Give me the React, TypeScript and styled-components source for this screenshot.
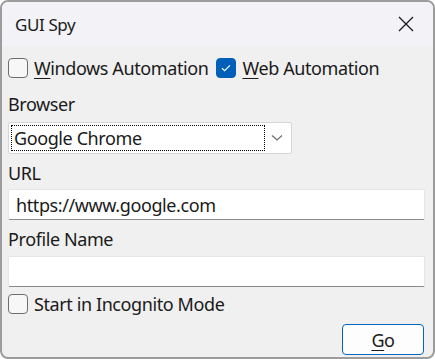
import React, {FC} from 'react';
import styled, {createGlobalStyle} from "styled-components";

const GlobalStyle = createGlobalStyle`
  html, body {
    margin: 0;
    padding: 0;
    background: #ffffff;
  }
  body {
    font-family: "Noto Sans", "Open Sans", sans-serif;
    font-size: 18px;
    letter-spacing: -0.4px;
    color: #1a1a1a;
  }
`

const Window = styled.div`
  width: 435px;
  height: 359px;
  box-sizing: border-box;
  border: 2px solid #9c9c9c;
  border-radius: 8px;
  overflow: hidden;
  background: #f0f0f0;
  display: flex;
  flex-direction: column;
`
const TitleBar = styled.div`
  height: 44px;
  flex: none;
  display: flex;
  align-items: center;
  justify-content: space-between;
  padding: 0 18px 0 13px;
  background: #f3f2f7;
  font-size: 17px;
  color: #1b1b1b;
`
const CloseButton = styled.div`
  display: flex;
  align-items: center;
  justify-content: center;
  width: 18px;
  height: 18px;
`
const Content = styled.div`
  flex: 1;
  display: flex;
  flex-direction: column;
  padding: 11px 8px 0 6px;
`
const CheckRow = styled.div<{ $gap?: number }>`
  display: flex;
  align-items: center;
  gap: 8px;
  height: 22px;
  margin-top: ${p => p.$gap ?? 0}px;
`
const CheckItem = styled.label`
  display: flex;
  align-items: center;
  gap: 6px;
  white-space: nowrap;
`
const Box = styled.span<{ $checked?: boolean }>`
  width: 20px;
  height: 20px;
  box-sizing: border-box;
  border-radius: 4px;
  border: 1px solid ${p => p.$checked ? '#005fb8' : '#6e6e6e'};
  background: ${p => p.$checked ? '#005fb8' : '#f7f7f7'};
  display: flex;
  align-items: center;
  justify-content: center;
  flex: none;
`
const Key = styled.span`
  text-decoration: underline;
  text-underline-offset: 3px;
  text-decoration-thickness: 1px;
`
const FieldLabel = styled.div<{ $gap: number }>`
  line-height: 24px;
  height: 24px;
  margin-top: ${p => p.$gap}px;
`
const Combo = styled.div`
  width: 284px;
  height: 32px;
  box-sizing: border-box;
  margin-top: 6px;
  background: #ffffff;
  border: 1px solid #d6d6d6;
  border-radius: 2px;
  display: flex;
  align-items: center;
  padding: 2px;
`
const ComboValue = styled.div`
  width: 254px;
  height: 26px;
  box-sizing: border-box;
  border: 1px dotted #000000;
  display: flex;
  align-items: center;
  padding-left: 2px;
  line-height: 24px;
`
const Chevron = styled.div`
  flex: 1;
  display: flex;
  justify-content: center;
  align-items: center;
`
const Field = styled.div<{ $gap: number }>`
  height: 31px;
  flex: none;
  box-sizing: border-box;
  margin-top: ${p => p.$gap}px;
  background: #ffffff;
  border: 1px solid #e6e6e6;
  border-bottom: 1px solid #8a8a8a;
  border-radius: 2px;
  display: flex;
  align-items: center;
  padding-left: 7px;
`
const Footer = styled.div`
  display: flex;
  justify-content: flex-end;
  margin-top: 9px;
  padding-right: 1px;
`
const GoButton = styled.button`
  width: 82px;
  height: 31px;
  box-sizing: border-box;
  border: 1px solid #0067c0;
  border-radius: 4px;
  background: #fdfdfd;
  font-family: inherit;
  font-size: 18px;
  letter-spacing: inherit;
  color: #1a1a1a;
  padding: 0;
`

const Check: FC = () => (
    <svg width="12" height="10" viewBox="0 0 12 10">
        <path d="M2 5.2 L4.6 7.6 L10 2.4" fill="none" stroke="#ffffff" strokeWidth="1.2"/>
    </svg>
)

const App: FC = () => {
    return (
        <>
            <GlobalStyle/>
            <Window>
                <TitleBar>
                    <span>GUI Spy</span>
                    <CloseButton>
                        <svg width="16" height="16" viewBox="0 0 16 16">
                            <path d="M1 1 L15 15 M15 1 L1 15" stroke="#1b1b1b" strokeWidth="1.3"/>
                        </svg>
                    </CloseButton>
                </TitleBar>
                <Content>
                    <CheckRow>
                        <CheckItem>
                            <Box/>
                            <span><Key>W</Key>indows Automation</span>
                        </CheckItem>
                        <CheckItem>
                            <Box $checked><Check/></Box>
                            <span><Key>W</Key>eb Automation</span>
                        </CheckItem>
                    </CheckRow>
                    <FieldLabel $gap={13}>Browser</FieldLabel>
                    <Combo>
                        <ComboValue>Google Chrome</ComboValue>
                        <Chevron>
                            <svg width="12" height="8" viewBox="0 0 12 8">
                                <path d="M1 1.5 L6 6 L11 1.5" fill="none" stroke="#6a6a6a" strokeWidth="1.1"/>
                            </svg>
                        </Chevron>
                    </Combo>
                    <FieldLabel $gap={7}>URL</FieldLabel>
                    <Field $gap={4}>https://www.google.com</Field>
                    <FieldLabel $gap={7}>Profile Name</FieldLabel>
                    <Field $gap={5}/>
                    <CheckRow $gap={6}>
                        <CheckItem>
                            <Box/>
                            <span>Start in Incognito Mode</span>
                        </CheckItem>
                    </CheckRow>
                    <Footer>
                        <GoButton><Key>G</Key>o</GoButton>
                    </Footer>
                </Content>
            </Window>
        </>
    );
};

export default App;
